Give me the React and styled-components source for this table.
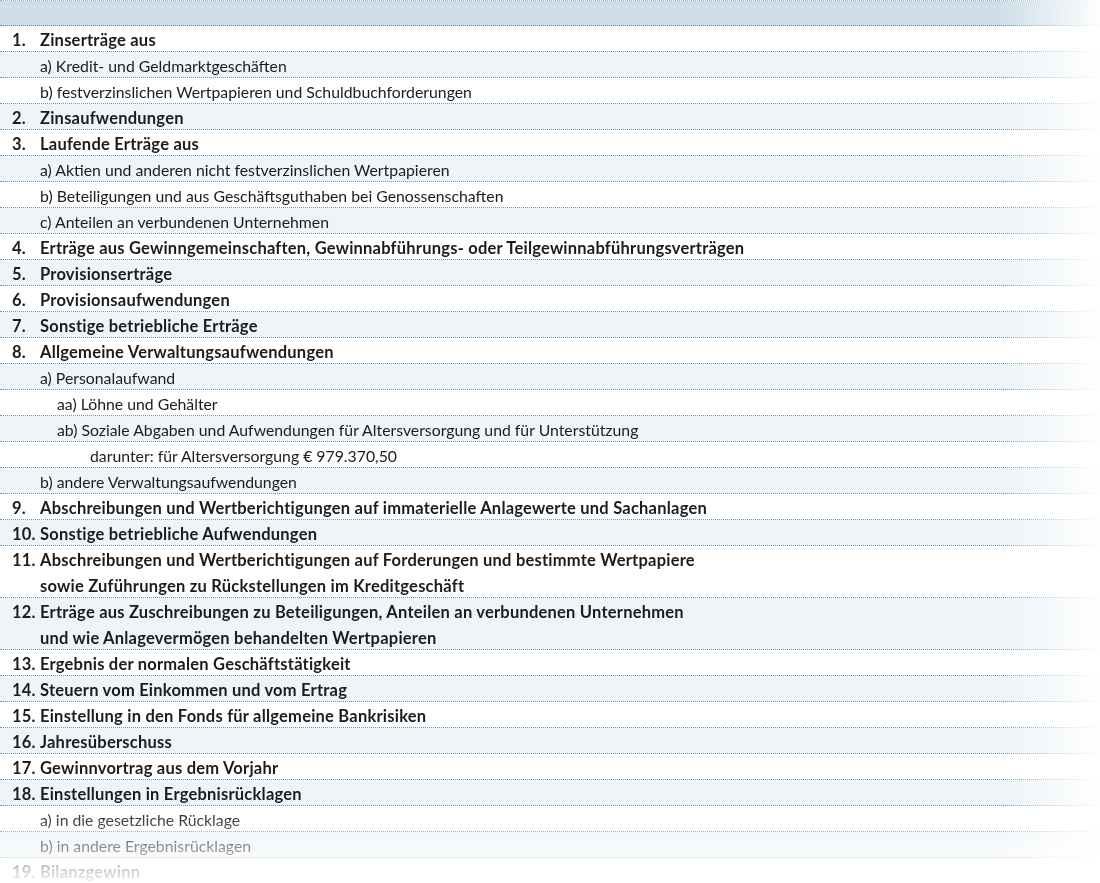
import React from 'react';
import styled, { createGlobalStyle } from 'styled-components';

const rows = [
    { num: '1.', text: 'Zinserträge aus', main: true },
    { text: 'a) Kredit- und Geldmarktgeschäften', level: 1 },
    { text: 'b) festverzinslichen Wertpapieren und Schuldbuchforderungen', level: 1 },
    { num: '2.', text: 'Zinsaufwendungen', main: true },
    { num: '3.', text: 'Laufende Erträge aus', main: true },
    { text: 'a) Aktien und anderen nicht festverzinslichen Wertpapieren', level: 1 },
    { text: 'b) Beteiligungen und aus Geschäftsguthaben bei Genossenschaften', level: 1 },
    { text: 'c) Anteilen an verbundenen Unternehmen', level: 1 },
    { num: '4.', text: 'Erträge aus Gewinngemeinschaften, Gewinnabführungs- oder Teilgewinnabführungsverträgen', main: true },
    { num: '5.', text: 'Provisionserträge', main: true },
    { num: '6.', text: 'Provisionsaufwendungen', main: true },
    { num: '7.', text: 'Sonstige betriebliche Erträge', main: true },
    { num: '8.', text: 'Allgemeine Verwaltungsaufwendungen', main: true },
    { text: 'a) Personalaufwand', level: 1 },
    { text: 'aa) Löhne und Gehälter', level: 2 },
    { text: 'ab) Soziale Abgaben und Aufwendungen für Altersversorgung und für Unterstützung', level: 2 },
    { text: 'darunter: für Altersversorgung € 979.370,50', level: 3 },
    { text: 'b) andere Verwaltungsaufwendungen', level: 1 },
    { num: '9.', text: 'Abschreibungen und Wertberichtigungen auf immaterielle Anlagewerte und Sachanlagen', main: true },
    { num: '10.', text: 'Sonstige betriebliche Aufwendungen', main: true },
    { num: '11.', text: ['Abschreibungen und Wertberichtigungen auf Forderungen und bestimmte Wertpapiere', 'sowie Zuführungen zu Rückstellungen im Kreditgeschäft'], main: true },
    { num: '12.', text: ['Erträge aus Zuschreibungen zu Beteiligungen, Anteilen an verbundenen Unternehmen', 'und wie Anlagevermögen behandelten Wertpapieren'], main: true },
    { num: '13.', text: 'Ergebnis der normalen Geschäftstätigkeit', main: true },
    { num: '14.', text: 'Steuern vom Einkommen und vom Ertrag', main: true },
    { num: '15.', text: 'Einstellung in den Fonds für allgemeine Bankrisiken', main: true },
    { num: '16.', text: 'Jahresüberschuss', main: true },
    { num: '17.', text: 'Gewinnvortrag aus dem Vorjahr', main: true },
    { num: '18.', text: 'Einstellungen in Ergebnisrücklagen', main: true },
    { text: 'a) in die gesetzliche Rücklage', level: 1 },
    { text: 'b) in andere Ergebnisrücklagen', level: 1 },
    { num: '19.', text: 'Bilanzgewinn', main: true },
];

const indents = [40, 40, 57, 90];

export default function App() {
    return (
        <>
            <GlobalStyle />
            <FadeRight>
                <FadeBottom>
                    <Table>
                        <HeaderRow />
                        {rows.map((row, i) => {
                            const lines = Array.isArray(row.text) ? row.text : [row.text];
                            return (
                                <Row key={i} $shade={i % 2 === 1} $lines={lines.length}>
                                    {row.main ? (
                                        <>
                                            <Num>{row.num}</Num>
                                            <Label $main>
                                                {lines.map((l, j) => <Line key={j}>{l}</Line>)}
                                            </Label>
                                        </>
                                    ) : (
                                        <Label $indent={indents[row.level]}>
                                            <Line>{row.text}</Line>
                                        </Label>
                                    )}
                                </Row>
                            );
                        })}
                    </Table>
                </FadeBottom>
            </FadeRight>
        </>
    );
}

const GlobalStyle = createGlobalStyle`
  html, body {
    margin: 0;
    padding: 0;
    background: #ffffff;
  }
`;

const FadeRight = styled.div`
  width: 1100px;
  -webkit-mask-image: linear-gradient(to right, #000 0, #000 1000px, rgba(0, 0, 0, 0.04) 1100px);
  mask-image: linear-gradient(to right, #000 0, #000 1000px, rgba(0, 0, 0, 0.04) 1100px);
`;

const FadeBottom = styled.div`
  height: 883px;
  overflow: hidden;
  -webkit-mask-image: linear-gradient(to bottom, #000 0, #000 808px, rgba(0, 0, 0, 0.06) 883px);
  mask-image: linear-gradient(to bottom, #000 0, #000 808px, rgba(0, 0, 0, 0.06) 883px);
`;

const Table = styled.div`
  display: flex;
  flex-direction: column;
  font-family: Lato, "Open Sans", sans-serif;
  font-size: 15.8px;
  color: #1c1c1c;
  border-top: 1px dotted #9ab0c0;
`;

const HeaderRow = styled.div`
  height: 25px;
  box-sizing: border-box;
  background: #cfdee8;
  border-bottom: 1px dotted #5a8bb0;
`;

const Row = styled.div`
  display: flex;
  align-items: flex-start;
  box-sizing: border-box;
  height: ${p => p.$lines * 26}px;
  background: ${p => (p.$shade ? '#eef4f8' : '#ffffff')};
  border-bottom: 1px dotted #6b98b9;
`;

const Num = styled.div`
  width: 28px;
  padding-left: 12px;
  padding-top: 2px;
  font-size: 16.5px;
  font-weight: 700;
  line-height: 24px;
  letter-spacing: 0.2px;
`;

const Label = styled.div`
  display: flex;
  flex-direction: column;
  padding-left: ${p => (p.$main ? 0 : p.$indent)}px;
  font-size: ${p => (p.$main ? '16.5px' : '15.8px')};
  font-weight: ${p => (p.$main ? 700 : 400)};
  letter-spacing: ${p => (p.$main ? '0.22px' : '0')};
`;

const Line = styled.span`
  box-sizing: border-box;
  padding-top: 2px;
  line-height: 24px;
  height: 26px;
  white-space: nowrap;
`;
